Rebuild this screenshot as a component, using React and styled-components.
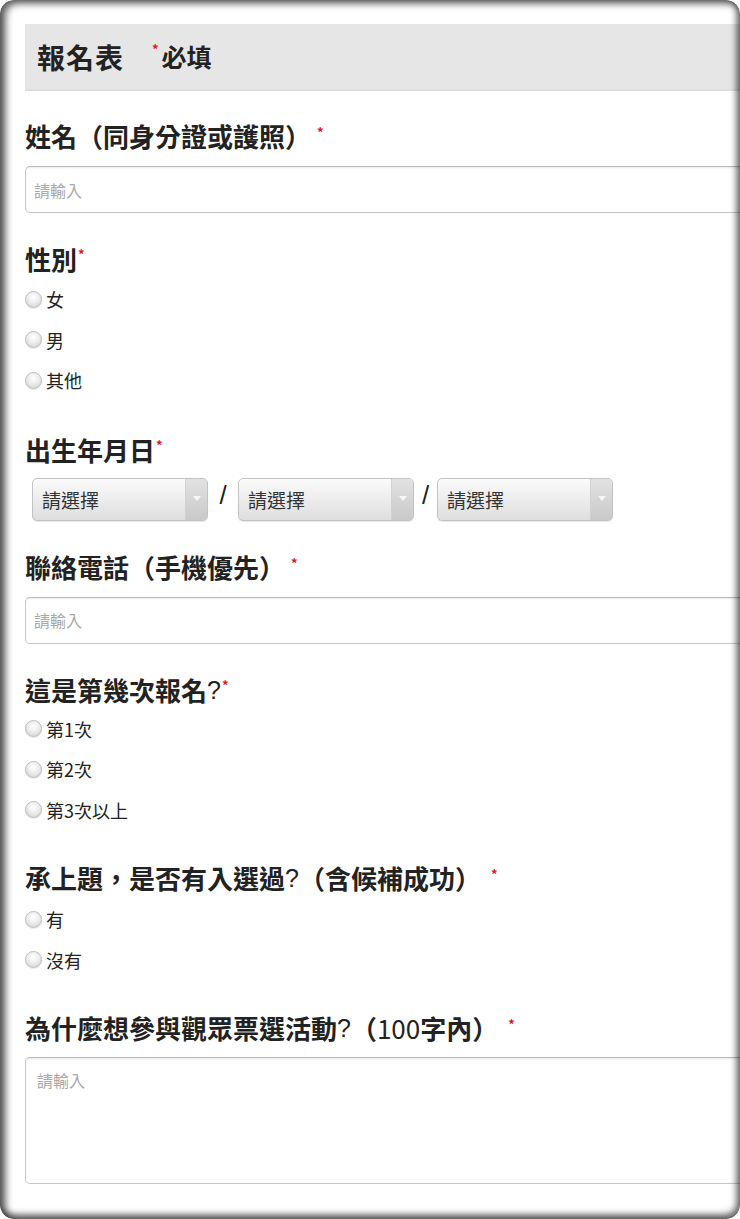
import React from 'react'
import styled, { createGlobalStyle } from 'styled-components'

const GlobalStyles = createGlobalStyle`
  * { box-sizing: border-box; }
  html, body { margin: 0; padding: 0; background: #fff; }
  body {
    font-family: "Noto Sans CJK TC", "Noto Sans", sans-serif;
    color: #222;
  }
`

const Frame = styled.div`
  position: relative;
  width: 740px;
  height: 1219px;
  border-radius: 14px;
  overflow: hidden;
  background: #fff;

  &::after {
    content: '';
    position: absolute;
    inset: 0;
    border-radius: 14px;
    pointer-events: none;
    box-shadow: inset 4px 2px 7px 2px rgba(0, 0, 0, 0.55),
      inset -2px -3px 6px 2px rgba(0, 0, 0, 0.5);
  }
`

const Form = styled.form`
  width: 780px;
  padding: 24px 0 0 25px;
`

const Header = styled.div`
  display: flex;
  align-items: center;
  height: 67px;
  padding-left: 12px;
  background: #e6e6e6;
  border-bottom: 2px solid #dedede;
`

const Title = styled.h1`
  margin: 0;
  font-size: 28px;
  font-weight: 700;
  line-height: 1;
  letter-spacing: 1px;
  color: #222;
`

const Required = styled.span`
  display: flex;
  align-items: flex-start;
  margin-left: 28px;
  font-size: 25px;
  font-weight: 700;
  line-height: 1;
`

const Star = styled.span`
  color: #e0161e;
  font-size: 13px;
  font-weight: 700;
  line-height: 1;
  margin-left: ${p => p.$gap || 0}px;
  margin-right: ${p => p.$after || 0}px;
  margin-top: ${p => p.$top || 0}px;
  align-self: flex-start;
`

const Field = styled.div`
  margin-top: ${p => p.$top}px;
`

const Label = styled.div`
  display: flex;
  align-items: flex-start;
  font-size: 26px;
  font-weight: 700;
  line-height: 36px;
  height: 36px;
  color: #222;
  white-space: nowrap;
`

const Q = styled.span`
  font-weight: 400;
  font-family: "Liberation Sans", sans-serif;
  font-size: 25px;
`

const Num = styled.span`
  font-weight: 400;
`

const TextInput = styled.input`
  display: block;
  width: 100%;
  height: 47px;
  margin-top: 12px;
  padding: 0 8px;
  border: 1px solid #c6c6c6;
  border-top-color: #b8b8b8;
  border-radius: 5px;
  font-family: inherit;
  font-size: 16px;
  color: #333;
  background: #fff;
  box-shadow: inset 0 1px 2px rgba(0, 0, 0, 0.08);
  outline: none;

  &::placeholder { color: #a9a9a9; }
`

const TextArea = styled.textarea`
  display: block;
  width: 100%;
  height: 127px;
  margin-top: 11px;
  padding: 10px 11px;
  border: 1px solid #c6c6c6;
  border-top-color: #b8b8b8;
  border-radius: 5px;
  font-family: inherit;
  font-size: 16px;
  line-height: 24px;
  color: #333;
  resize: none;
  box-shadow: inset 0 1px 2px rgba(0, 0, 0, 0.08);
  outline: none;

  &::placeholder { color: #a9a9a9; }
`

const RadioList = styled.div`
  margin-top: ${p => p.$top}px;
  display: flex;
  flex-direction: column;
`

const RadioRow = styled.label`
  display: flex;
  align-items: center;
  height: 40.5px;
  font-size: 18px;
  line-height: 1;
  color: #222;
`

const Radio = styled.input.attrs({ type: 'radio' })`
  appearance: none;
  width: 17px;
  height: 17px;
  margin: 0 4px 0 0;
  border-radius: 50%;
  border: 1px solid #bdbdbd;
  background: radial-gradient(circle at 50% 35%, #ffffff 0%, #ededed 45%, #cfcfcf 100%);
  box-shadow: 0 1px 1px rgba(0, 0, 0, 0.1);
`

const DateRow = styled.div`
  display: flex;
  align-items: center;
  margin-top: 10px;
  padding-left: 7px;
`

const SelectBox = styled.div`
  display: flex;
  width: 176px;
  height: 43px;
  border: 1px solid #c3c3c3;
  border-radius: 5px;
  overflow: hidden;
  background: linear-gradient(#fbfbfb, #dedede);
  box-shadow: 0 1px 1px rgba(0, 0, 0, 0.1);
`

const Select = styled.select`
  appearance: none;
  flex: 1;
  min-width: 0;
  border: none;
  background: transparent;
  padding: 0 0 0 9px;
  font-family: inherit;
  font-size: 19px;
  color: #333;
  outline: none;
`

const Arrow = styled.span`
  display: flex;
  align-items: center;
  justify-content: center;
  width: 22px;
  border-left: 1px solid #d2d2d2;
  background: linear-gradient(#e2e2e2, #c9c9c9);

  &::before {
    content: '';
    width: 0;
    height: 0;
    border-left: 4px solid transparent;
    border-right: 4px solid transparent;
    border-top: 5px solid #f7f7f7;
    margin-top: -2px;
  }
`

const Slash = styled.span`
  width: ${p => p.$w}px;
  text-align: center;
  font-family: "Liberation Sans", sans-serif;
  font-size: 26px;
  font-weight: 300;
  color: #222;
  line-height: 1;
  margin-top: -8px;
`

const RadioGroup = ({ name, options, top = 2 }) => (
  <RadioList $top={top}>
    {options.map(o => (
      <RadioRow key={o}>
        <Radio name={name} />
        {o}
      </RadioRow>
    ))}
  </RadioList>
)

const DateSelect = () => (
  <SelectBox>
    <Select defaultValue="">
      <option value="">請選擇</option>
    </Select>
    <Arrow />
  </SelectBox>
)

export default function App() {
  return (
    <Frame>
      <GlobalStyles />
      <Form onSubmit={e => e.preventDefault()}>
        <Header>
          <Title>報名表</Title>
          <Required>
            <Star $top={-2} $after={3}>*</Star>必填
          </Required>
        </Header>

        <Field $top={27}>
          <Label>姓名（同身分證或護照）<Star $gap={6} $top={7}>*</Star></Label>
          <TextInput placeholder="請輸入" />
        </Field>

        <Field $top={28}>
          <Label>性別<Star $gap={1} $top={6}>*</Star></Label>
          <RadioGroup name="gender" options={['女', '男', '其他']} />
        </Field>

        <Field $top={31}>
          <Label>出生年月日<Star $gap={1} $top={6}>*</Star></Label>
          <DateRow>
            <DateSelect />
            <Slash $w={30}>/</Slash>
            <DateSelect />
            <Slash $w={23}>/</Slash>
            <DateSelect />
          </DateRow>
        </Field>

        <Field $top={28}>
          <Label>聯絡電話（手機優先）<Star $gap={6} $top={7}>*</Star></Label>
          <TextInput placeholder="請輸入" />
        </Field>

        <Field $top={28}>
          <Label>這是第幾次報名<Q>?</Q><Star $gap={1} $top={6}>*</Star></Label>
          <RadioGroup name="times" top={1} options={['第1次', '第2次', '第3次以上']} />
        </Field>

        <Field $top={30}>
          <Label>承上題，是否有入選過<Q>?</Q>（含候補成功）<Star $gap={10} $top={7}>*</Star></Label>
          <RadioGroup name="selected" top={3} options={['有', '沒有']} />
        </Field>

        <Field $top={30}>
          <Label>為什麼想參與觀眾票選活動<Q>?</Q>（<Num>100</Num>字內）<Star $gap={10} $top={7}>*</Star></Label>
          <TextArea placeholder="請輸入" />
        </Field>
      </Form>
    </Frame>
  )
}
